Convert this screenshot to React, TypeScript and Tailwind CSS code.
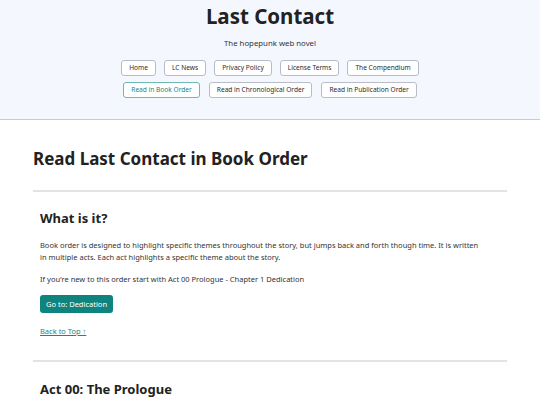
const navTop = ['Home', 'LC News', 'Privacy Policy', 'License Terms', 'The Compendium'];
const navOrder = ['Read in Book Order', 'Read in Chronological Order', 'Read in Publication Order'];

function NavButton({ label, active }: { label: string; active?: boolean }) {
  return (
    <a
      href="#"
      className={`block rounded-[3px] border bg-white px-[7px] py-[3px] text-[6.6px] leading-[8px] ${
        active ? 'border-[#6fb8b3] text-[#1f8580]' : 'border-[#b9bcc6] text-[#2b2b2b]'
      }`}
    >
      {label}
    </a>
  );
}

export default function App() {
  return (
    <div className="min-h-screen bg-white text-[#222] font-['Noto_Sans',sans-serif]">
      <header className="border-b border-[#c9cad3] bg-[#f5f7fe] pt-[3px] pb-[21px] text-center">
        <h1 className="text-[20.5px] font-bold leading-[27px]">Last Contact</h1>
        <p className="mt-[8px] text-[7.8px] leading-[10px] text-[#333]">The hopepunk web novel</p>
        <nav className="mt-[12px] flex flex-col items-center gap-[6px]">
          <div className="flex gap-[8px]">
            {navTop.map((n) => (
              <NavButton key={n} label={n} />
            ))}
          </div>
          <div className="flex gap-[9px]">
            {navOrder.map((n, i) => (
              <NavButton key={n} label={n} active={i === 0} />
            ))}
          </div>
        </nav>
      </header>

      <main className="mx-auto w-[474px] pt-[26px]">
        <h2 className="text-[17px] font-bold leading-[26px]">Read Last Contact in Book Order</h2>
        <hr className="mt-[18px] border-t-2 border-[#e3e3e6]" />

        <section className="px-[7px] pt-[16px] pb-[23px] text-[7.5px] leading-[12px] text-[#333]">
          <h3 className="text-[13px] font-bold leading-[20px] text-[#222]">What is it?</h3>
          <p className="mt-[11px] w-[440px]">
            Book order is designed to highlight specific themes throughout the story, but jumps back and forth though
            time. It is written in multiple acts. Each act highlights a specific theme about the story.
          </p>
          <p className="mt-[10px]">If you're new to this order start with Act 00 Prologue - Chapter 1 Dedication</p>
          <div className="mt-[10px] flex">
            <button className="rounded-[3px] bg-[#0f847f] px-[6px] py-[4px] text-[7.5px] leading-[10px] text-white">
              Go to: Dedication
            </button>
          </div>
          <div className="mt-[12px]">
            <a href="#" className="text-[#1f8580] underline">
              Back to Top ↑
            </a>
          </div>
        </section>

        <hr className="border-t-2 border-[#e3e3e6]" />

        <section className="px-[7px] pt-[17px]">
          <h3 className="text-[13px] font-bold leading-[20px]">Act 00: The Prologue</h3>
        </section>
      </main>
    </div>
  );
}
